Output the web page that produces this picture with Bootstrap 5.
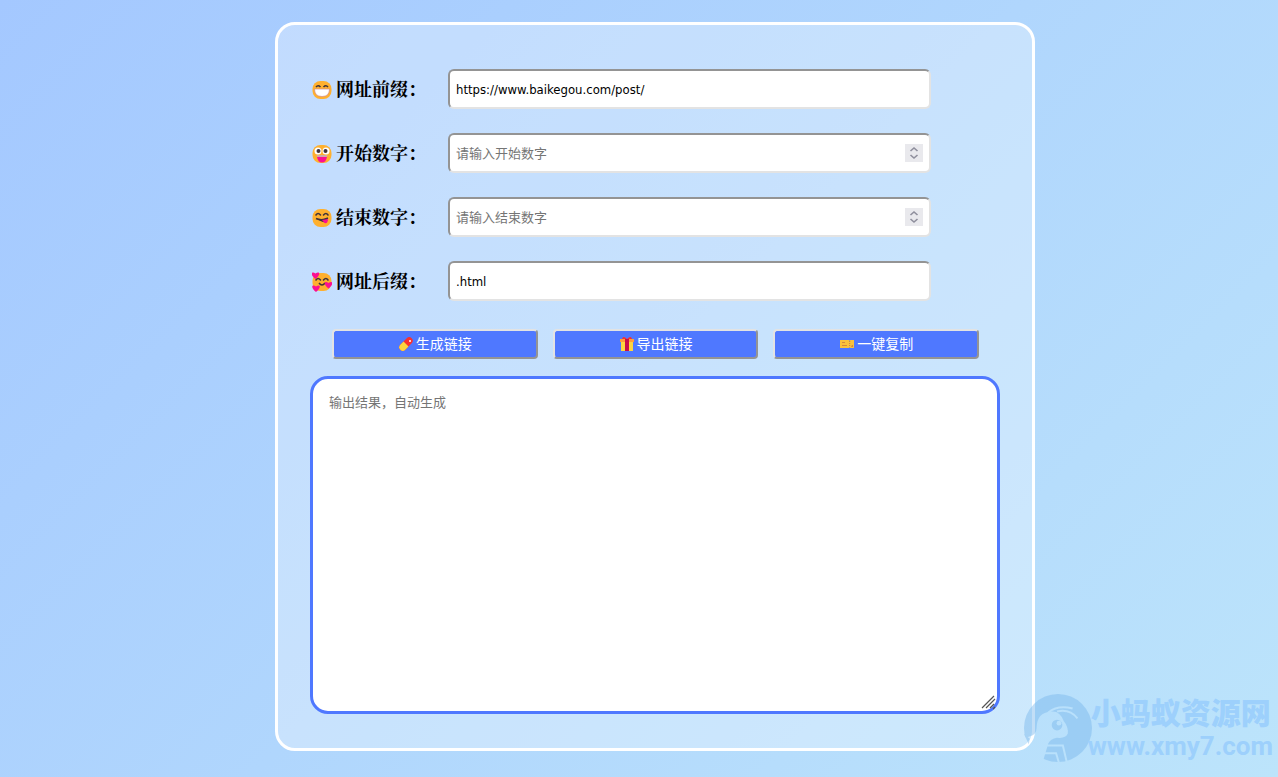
<!DOCTYPE html>
<html lang="zh-CN">
<head>
<meta charset="utf-8">
<meta name="viewport" content="width=device-width, initial-scale=1">
<title>链接生成</title>
<link href="https://cdn.jsdelivr.net/npm/bootstrap@5.3.0/dist/css/bootstrap.min.css" rel="stylesheet">
<style>
body{min-height:100vh;background:linear-gradient(135deg,#a4c8ff,#bce4fb) no-repeat;font-family:"Liberation Sans","Noto Sans CJK SC",sans-serif;color:#000}
.page{padding:22px 0 26px 32px}
.panel{max-width:760px;border:3px solid #fff;border-radius:20px;background:rgba(255,255,255,.3);padding:44px 32px 34px}
.field-row{margin-bottom:24px}
.field-label{width:138px;padding:2px 0 0 2px;font-family:"Liberation Serif","Noto Serif CJK SC","Noto Sans CJK SC",serif;font-size:18px;line-height:24px;font-weight:700;gap:4px;white-space:nowrap}
.field-label svg{width:20px;height:20px}
.field-box{position:relative;width:483px;max-width:100%}
.field-input{width:100%;height:40px;border:2px solid;border-color:#949494 #e3e3e3 #e3e3e3 #949494;border-radius:6px;background:#fff;padding:0 6px;font-family:"DejaVu Sans Condensed","Noto Sans CJK SC",sans-serif;font-size:13px;color:#000;outline:0;appearance:textfield;display:block}
.field-input[type=number]{font-family:"Noto Sans","Noto Sans CJK SC",sans-serif}
.field-input::-webkit-inner-spin-button{display:none}
.field-input::placeholder,.result::placeholder{color:#757575;opacity:1}
.spin{position:absolute;right:8px;top:11px;width:18px;height:18px;background:#e9e9ed;pointer-events:none}
.actions{padding:4px 21px 0 22px;gap:15px}
.action{flex:1;height:30px;border:2px solid;border-color:#e3e3e3 #949494 #949494 #e3e3e3;border-radius:4px;background:#4f78ff;color:#fff;font-size:14px;line-height:20px;padding:0;gap:2px}
.action svg{width:16px;height:16px}
.result{width:100%;height:338px;margin-top:17px;border:3px solid #4f78ff;border-radius:18px;padding:15px 16px;font-family:"Liberation Mono","Noto Sans CJK SC",monospace;font-size:13px;line-height:20px;outline:0;display:block;background:#fff;resize:none}
.grip{position:absolute;right:3px;bottom:3px;width:16px;height:16px}
.brand{position:absolute;right:5px;bottom:14px;color:#9dd0fc;pointer-events:none;font-weight:700}
.brand svg{width:70px;height:70px;margin-right:-5px}
.brand-name{padding-left:3px;font-family:"Noto Sans CJK SC",sans-serif;font-size:30px;line-height:36px;font-weight:900;white-space:nowrap}
.brand-url{font-family:Roboto,sans-serif;font-size:26px;line-height:34px}
</style>
</head>
<body class="position-relative">
<svg class="position-absolute" width="0" height="0"><defs>
<path id="eyes" d="M4 8q2-3 4.500 0M11.500 8q2.500-3 4.500 0" fill="none" stroke="#40333a" stroke-width="1.600" stroke-linecap="round"/>
<path id="heart" d="M0 3.500C-6-1-4-5 0-2 4-5 6-1 0 3.500Z" fill="#fb0f91"/>
<g id="arrows" fill="none" stroke="#8f8f9d" stroke-width="1.600"><path d="M5.500 7l3.500-3 3.500 3M5.500 11l3.500 3 3.500-3"/></g>
<mask id="ant" maskUnits="userSpaceOnUse" x="0" y="0" width="72" height="72"><circle cx="36" cy="36" r="35" fill="#fff"/>
<path d="M0 46 6 45Q14 43 14 36 14 20 29 19 38 18 42 29 47 35 46 42 44 47 35 46 28 47 26 52L20 72H0Z" fill="#000"/><path d="M1 42 7 47 6 53Z" fill="#fff"/>
<circle cx="35" cy="33" r="5.500" fill="#fff"/><circle cx="37" cy="31" r="2.500" fill="#000"/>
<path d="M26 20Q36 12 51 16M35 19Q48 16 56 26M24 54h17l4 17M22 62h12l3 10" fill="none" stroke="#000" stroke-width="2"/></mask>
</defs></svg>
<main class="page">
<form class="panel mx-auto" onsubmit="return false">
<div class="field-row d-flex align-items-center">
<label for="prefix" class="field-label d-flex align-items-center"><svg viewBox="0 0 20 20" aria-hidden="true"><rect x=".5" y="1" width="19" height="18" rx="8" fill="#ffb02e"/><path d="M4 7q2-2.500 4.500 0M11.500 7q2.500-2.500 4.500 0" fill="none" stroke="#40333a" stroke-width="1.500"/><path d="M2.500 9h15q0 7.500-7.500 7.500T2.500 9Z" fill="#fff" stroke="#d28a86" stroke-width=".7"/></svg>网址前缀：</label>
<div class="field-box"><input id="prefix" class="field-input" type="text" value="https://www.baikegou.com/post/"></div>
</div>
<div class="field-row d-flex align-items-center">
<label for="start" class="field-label d-flex align-items-center"><svg viewBox="0 0 20 20" aria-hidden="true"><rect x=".5" y="1" width="19" height="18" rx="8" fill="#ffb02e"/><circle cx="6" cy="7" r="3.500" fill="#fff"/><circle cx="14" cy="7" r="3.500" fill="#fff"/><circle cx="6.500" cy="7" r="2" fill="#40333a"/><circle cx="13.500" cy="7" r="2" fill="#40333a"/><path d="M4.500 11h11q-1 5-5.500 5t-5.500-5Z" fill="#cfa9a9"/><path d="M5 13h10q-1 5.500-5 5.500T5 13Z" fill="#fb0f91"/></svg>开始数字：</label>
<div class="field-box"><input id="start" class="field-input" type="number" placeholder="请输入开始数字"><svg class="spin" viewBox="0 0 18 18" aria-hidden="true"><use href="#arrows"/></svg></div>
</div>
<div class="field-row d-flex align-items-center">
<label for="end" class="field-label d-flex align-items-center"><svg viewBox="0 0 20 20" aria-hidden="true"><rect x=".5" y="1" width="19" height="18" rx="8" fill="#ffb02e"/><use href="#eyes" y="-1"/><path d="M4 10.500q6 2.500 12-.5" fill="none" stroke="#40333a" stroke-width="1.500"/><path d="M6 11q4 1 9-1 0 5-4 4T6 11Z" fill="#40333a"/><path d="M10 12l6-1q0 5-3.500 4Z" fill="#fb0f91"/></svg>结束数字：</label>
<div class="field-box"><input id="end" class="field-input" type="number" placeholder="请输入结束数字"><svg class="spin" viewBox="0 0 18 18" aria-hidden="true"><use href="#arrows"/></svg></div>
</div>
<div class="field-row d-flex align-items-center">
<label for="suffix" class="field-label d-flex align-items-center"><svg viewBox="0 0 20 20" aria-hidden="true"><rect x=".5" y="1" width="19" height="18" rx="8" fill="#ffb02e"/><use href="#eyes"/><path d="M7 11q3 4 6 0" fill="none" stroke="#40333a" stroke-width="1.500"/><use href="#heart" x="3.500" y="3.500"/><use href="#heart" x="16.500" y="13"/><use href="#heart" x="4" y="16.500"/></svg>网址后缀：</label>
<div class="field-box"><input id="suffix" class="field-input" type="text" value=".html"></div>
</div>
<div class="actions d-flex">
<button type="button" class="action d-flex align-items-center justify-content-center"><svg viewBox="0 0 16 16" aria-hidden="true"><g transform="rotate(45 8 8)"><rect x="4.500" width="7" height="16" rx="3.500" fill="#f8312f"/><path d="M4.500 8h7v4.500a3.500 3.500 0 0 1-7 0Z" fill="#fcd53f"/></g><circle cx="12" cy="5" r="1" fill="#fff"/></svg>生成链接</button>
<button type="button" class="action d-flex align-items-center justify-content-center"><svg viewBox="0 0 16 16" aria-hidden="true"><path d="M2 5h12v10H2Z" fill="#fcd53f"/><path d="M1 3h14v3H1Z" fill="#ff9c3a"/><path d="M6 3h4v12H6Z" fill="#ca0b4a"/><path d="M8 3Q4-1 3 3ZM8 3q4-4 5 0Z" fill="#f8312f"/></svg>导出链接</button>
<button type="button" class="action d-flex align-items-center justify-content-center"><svg viewBox="0 0 16 16" aria-hidden="true"><path d="M1 4h9l.7.800L11.400 4H15v8h-3.600l-.700-.8-.700.800H1Z" fill="#f9c23c"/><path d="M3 6h3v1H3ZM3 9h5v1H3ZM13 9h1v2h-2Z" fill="#d3883e"/><path d="M10.700 5v6" stroke="#b97b50" stroke-dasharray="1 1"/></svg>一键复制</button>
</div>
<div class="position-relative">
<textarea class="result" aria-label="输出结果" placeholder="输出结果，自动生成"></textarea>
<svg class="grip" viewBox="0 0 16 16" aria-hidden="true"><path d="M1 13 13 1M5 13 14 4M9 13l4-4M12 14l2-2" fill="none" stroke="#555" stroke-width="1.200"/></svg>
</div>
</form>
</main>
<aside class="brand d-flex align-items-center">
<svg viewBox="0 0 72 72" aria-hidden="true"><rect width="72" height="72" fill="#78b6ec" fill-opacity=".45" mask="url(#ant)"/></svg>
<div><div class="brand-name">小蚂蚁资源网</div><div class="brand-url">www.xmy7.com</div></div>
</aside>
<script src="https://cdn.jsdelivr.net/npm/bootstrap@5.3.0/dist/js/bootstrap.bundle.min.js"></script>
</body>
</html>
